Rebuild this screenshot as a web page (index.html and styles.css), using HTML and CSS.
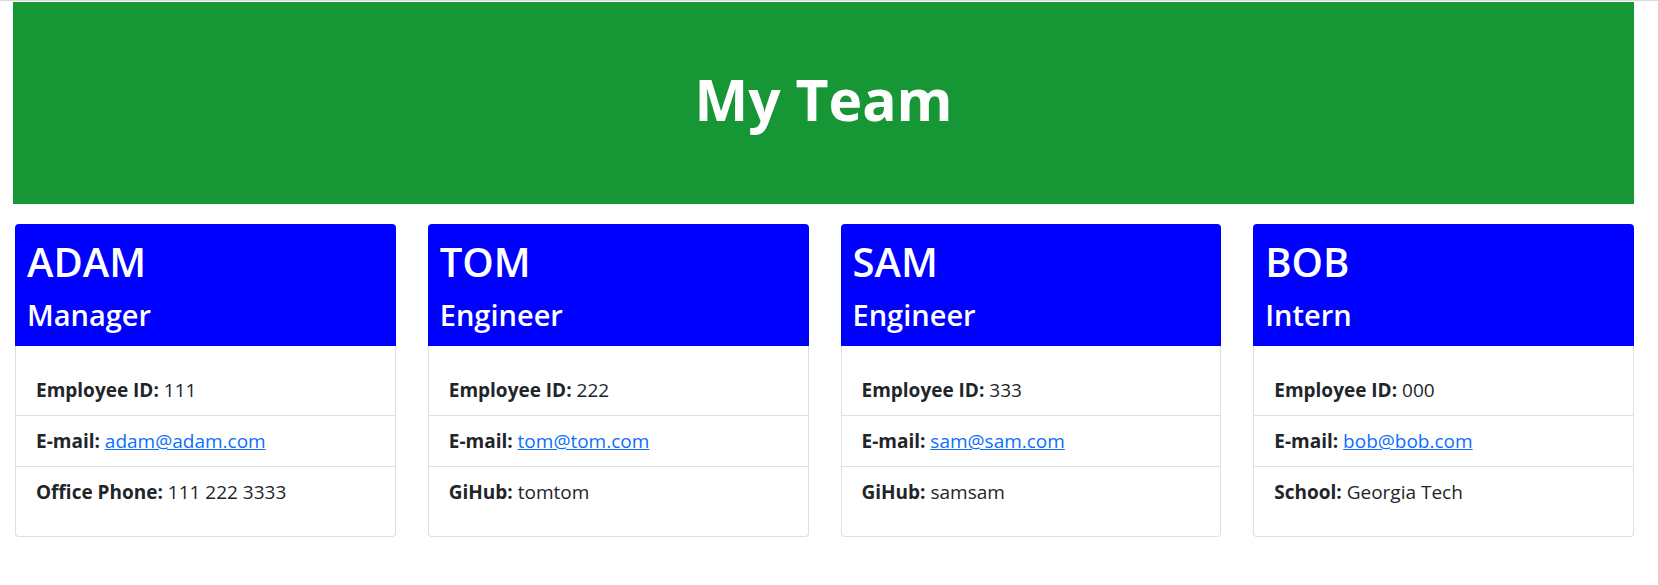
FILE: index.html
```html
<!DOCTYPE html>
<html lang="en">
<head>
<meta charset="utf-8">
<title>My Team</title>
<link rel="stylesheet" href="styles.css">
</head>
<body>
<header class="hero"><h1 class="hero-title">My Team</h1></header>
<main class="team">
  <section class="card">
    <div class="card-head"><h2 class="name">ADAM</h2><h3 class="role">Manager</h3></div>
    <ul class="info">
      <li class="row"><b>Employee ID:</b> 111</li>
      <li class="row"><b>E-mail:</b> <a href="#">adam@adam.com</a></li>
      <li class="row"><b>Office Phone:</b> 111 222 3333</li>
    </ul>
  </section>
  <section class="card">
    <div class="card-head"><h2 class="name">TOM</h2><h3 class="role">Engineer</h3></div>
    <ul class="info">
      <li class="row"><b>Employee ID:</b> 222</li>
      <li class="row"><b>E-mail:</b> <a href="#">tom@tom.com</a></li>
      <li class="row"><b>GiHub:</b> tomtom</li>
    </ul>
  </section>
  <section class="card">
    <div class="card-head"><h2 class="name">SAM</h2><h3 class="role">Engineer</h3></div>
    <ul class="info">
      <li class="row"><b>Employee ID:</b> 333</li>
      <li class="row"><b>E-mail:</b> <a href="#">sam@sam.com</a></li>
      <li class="row"><b>GiHub:</b> samsam</li>
    </ul>
  </section>
  <section class="card">
    <div class="card-head"><h2 class="name">BOB</h2><h3 class="role">Intern</h3></div>
    <ul class="info">
      <li class="row"><b>Employee ID:</b> 000</li>
      <li class="row"><b>E-mail:</b> <a href="#">bob@bob.com</a></li>
      <li class="row"><b>School:</b> Georgia Tech</li>
    </ul>
  </section>
</main>
</body>
</html>
```
FILE: styles.css
```css
* { box-sizing: border-box; }
html, body { margin: 0; background: #fff; }
body {
  font-family: "Open Sans", "Noto Sans", sans-serif;
  color: #212529;
  border-top: 1px solid #d9d9d9;
  padding: 1px 24px 0 13px;
}
.hero {
  height: 202px;
  background: #169635;
  display: flex;
  align-items: center;
  justify-content: center;
  padding-bottom: 8px;
}
.hero-title {
  margin: 0;
  color: #fff;
  font-size: 57px;
  font-weight: 700;
  line-height: 1;
}
.team {
  display: grid;
  grid-template-columns: repeat(4, 1fr);
  gap: 32px;
  margin-top: 20px;
  padding-left: 2px;
}
.card { display: flex; flex-direction: column; }
.card-head {
  background: #0000ff;
  color: #fff;
  border-radius: 4px 4px 0 0;
  padding: 14px 12px 13px;
  height: 122px;
}
.name {
  margin: 0 0 12px;
  font-size: 40px;
  font-weight: 600;
  line-height: 47px;
}
.role {
  margin: 0;
  font-size: 29px;
  font-weight: 600;
  line-height: 36px;
}
.info {
  list-style: none;
  margin: 0;
  padding: 19px 0;
  border: 1px solid #dfdfdf;
  border-top: 0;
  border-radius: 0 0 4px 4px;
}
.row {
  padding: 10px 20px;
  font-size: 19px;
  line-height: 30px;
}
.row + .row { border-top: 1px solid #dfdfdf; }
.row b { font-weight: 700; }
.row a { color: #0d6efd; text-decoration: underline; }
```
